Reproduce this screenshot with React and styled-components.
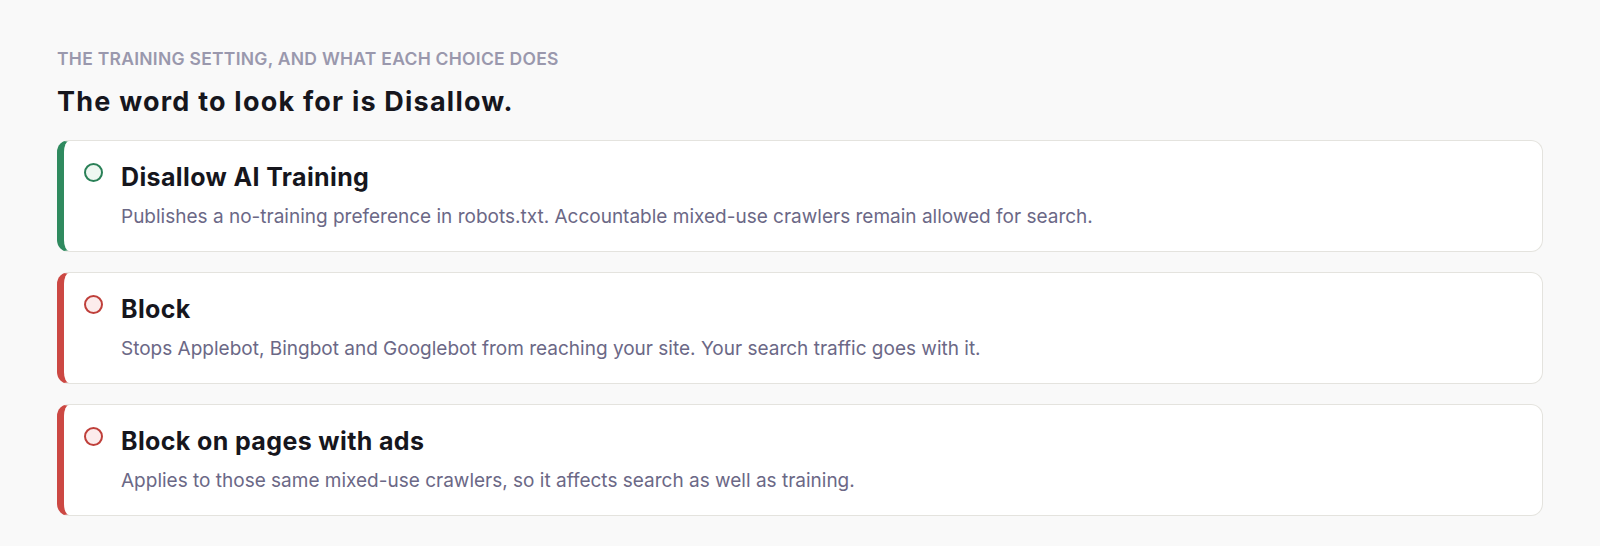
import React from 'react'
import styled, { createGlobalStyle } from 'styled-components';

const GlobalStyle = createGlobalStyle`
    body {
        margin: 0;
        background: #f9f9f9;
        font-family: Inter, "Liberation Sans", sans-serif;
    }
`;

const Page = styled.div`
    padding: 47px 57px 30px 57px;
`;

const Eyebrow = styled.div`
    font-size: 17.5px;
    font-weight: 600;
    letter-spacing: 0.015em;
    color: #9a98ad;
    text-transform: uppercase;
    line-height: 24px;
`;

const Heading = styled.h2`
    margin: 14px 0 21px 0;
    font-size: 27px;
    font-weight: 700;
    color: #16161d;
    line-height: 34px;
    letter-spacing: 0.045em;
`;

const List = styled.div`
    display: flex;
    flex-direction: column;
    gap: 20px;
`;

const Card = styled.div`
    display: flex;
    align-items: flex-start;
    gap: 18px;
    background: #fff;
    border: 1.5px solid #e4e3de;
    border-left: 7px solid ${p => p.tone === 'good' ? '#2f8a5f' : '#cc4843'};
    border-radius: 12px;
    padding: 21px 24px 22px 20px;
`;

const Dot = styled.span`
    flex: none;
    width: 15px;
    height: 15px;
    margin-top: 1px;
    border-radius: 50%;
    border: 2px solid ${p => p.tone === 'good' ? '#2a8057' : '#bf3f3a'};
    background: ${p => p.tone === 'good' ? '#eef7f1' : '#fcecec'};
`;

const Body = styled.div`
    display: flex;
    flex-direction: column;
    gap: 13px;
`;

const Title = styled.div`
    font-size: 25px;
    font-weight: 700;
    color: #16161d;
    line-height: 30px;
    letter-spacing: 0.015em;
`;

const Desc = styled.div`
    font-size: 19px;
    color: #6b6886;
    line-height: 24px;
`;

const options = [
    {
        tone: 'good',
        title: 'Disallow AI Training',
        desc: 'Publishes a no-training preference in robots.txt. Accountable mixed-use crawlers remain allowed for search.',
    },
    {
        tone: 'bad',
        title: 'Block',
        desc: 'Stops Applebot, Bingbot and Googlebot from reaching your site. Your search traffic goes with it.',
    },
    {
        tone: 'bad',
        title: 'Block on pages with ads',
        desc: 'Applies to those same mixed-use crawlers, so it affects search as well as training.',
    },
];

function App() {
    return (
        <Page>
            <GlobalStyle />
            <Eyebrow>The training setting, and what each choice does</Eyebrow>
            <Heading>The word to look for is Disallow.</Heading>
            <List>
                {options.map((item, index) => (
                    <Card tone={item.tone} key={index}>
                        <Dot tone={item.tone} />
                        <Body>
                            <Title>{item.title}</Title>
                            <Desc>{item.desc}</Desc>
                        </Body>
                    </Card>
                ))}
            </List>
        </Page>
    )
}

export default App
